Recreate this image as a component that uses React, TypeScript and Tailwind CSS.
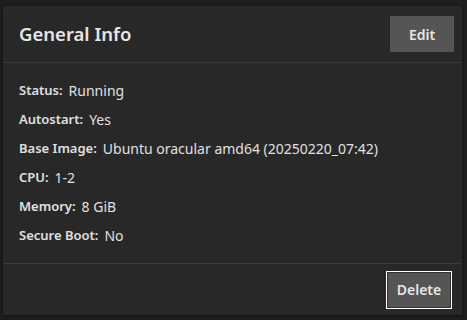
const rows: [string, string][] = [
  ["Status:", "Running"],
  ["Autostart:", "Yes"],
  ["Base Image:", "Ubuntu oracular amd64 (20250220_07:42)"],
  ["CPU:", "1-2"],
  ["Memory:", "8 GiB"],
  ["Secure Boot:", "No"],
];

export default function App() {
  return (
    <div className="min-h-[320px] bg-[#1e1e1e] pt-[6px] pl-[3px] pr-[5px] font-['Noto_Sans',sans-serif]">
      <div className="bg-[#282828] shadow-[0_1px_3px_rgba(0,0,0,0.5)]">
        {/* header */}
        <div className="flex h-[56px] items-center justify-between pl-4 pr-[8px]">
          <h2 className="text-[18.5px] font-semibold text-[#e6e6e6]">General Info</h2>
          <button
            type="button"
            className="h-[36px] w-[64px] bg-[#555555] text-[14px] font-semibold text-[#e6e6e6]"
          >
            Edit
          </button>
        </div>
        <div className="h-px bg-[#3a3a3a]" />

        {/* details */}
        <div className="flex flex-col px-4 pt-[13px] pb-[13px]">
          {rows.map(([label, value]) => (
            <div key={label} className="flex h-[29px] items-center gap-[6px] text-[#e0e0e0]">
              <span className="text-[13px] font-semibold">{label}</span>
              <span className="text-[14px]">{value}</span>
            </div>
          ))}
        </div>
        <div className="h-px bg-[#3a3a3a]" />

        {/* footer */}
        <div className="flex h-[51px] items-center justify-end pr-[10px]">
          <button
            type="button"
            className="h-[38px] w-[66px] border border-white bg-[#555555] text-[14px] font-semibold text-[#e6e6e6] shadow-[inset_0_0_0_1px_#333]"
          >
            Delete
          </button>
        </div>
      </div>
    </div>
  );
}
